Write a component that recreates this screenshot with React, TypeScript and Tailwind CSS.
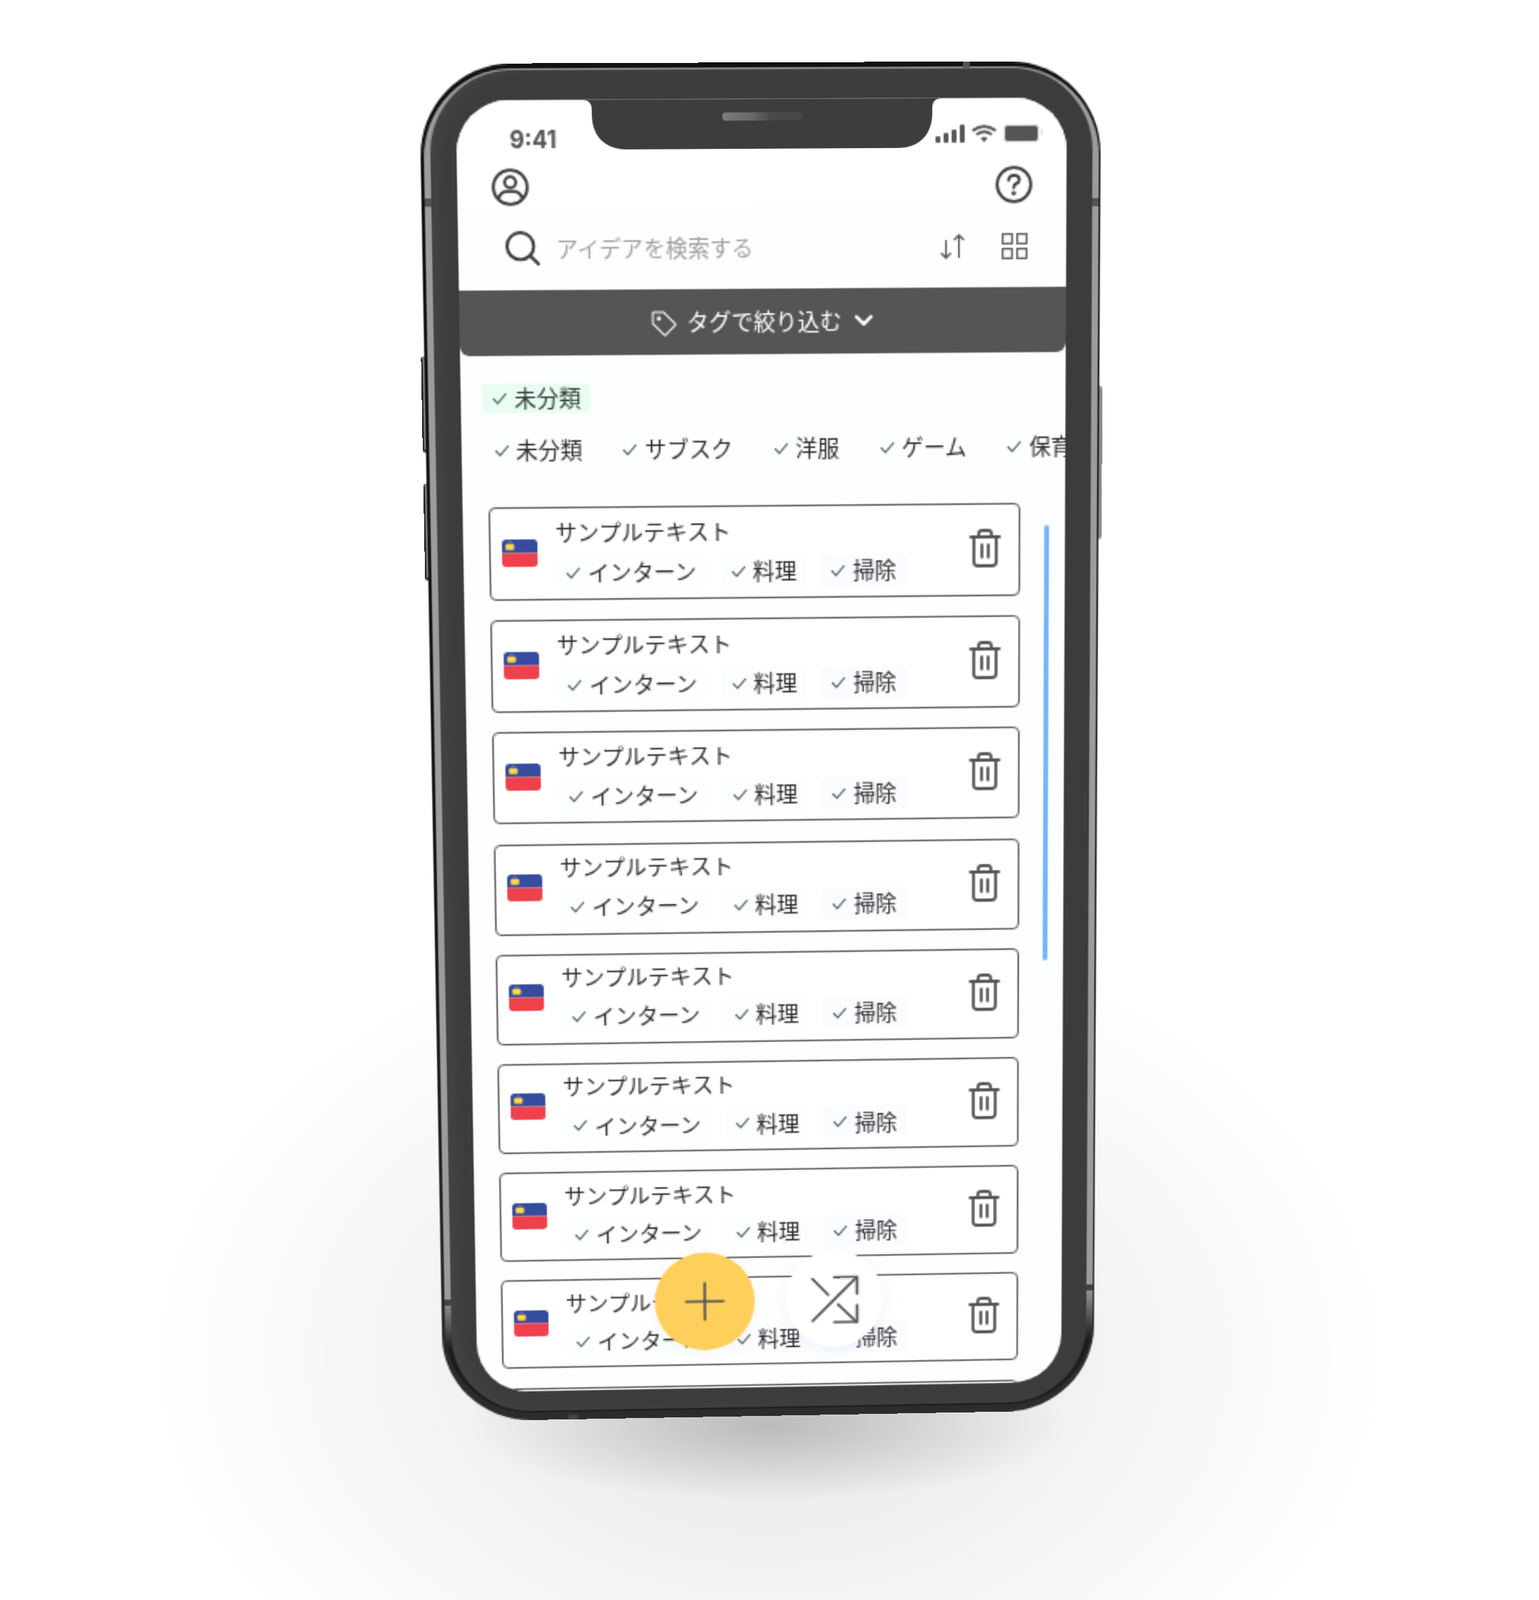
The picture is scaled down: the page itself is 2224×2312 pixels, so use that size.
import React from "react";

type P = [number, number];

function homography(x0: number, y0: number, w: number, h: number, q: P[]) {
  const [[x1, y1], [x2, y2], [x3, y3], [x4, y4]] = q;
  const dx1 = x2 - x3, dx2 = x4 - x3, sx = x1 - x2 + x3 - x4;
  const dy1 = y2 - y3, dy2 = y4 - y3, sy = y1 - y2 + y3 - y4;
  const den = dx1 * dy2 - dx2 * dy1;
  const g = (sx * dy2 - dx2 * sy) / den;
  const k = (dx1 * sy - sx * dy1) / den;
  const a = x2 - x1 + g * x2, b = x4 - x1 + k * x4, c = x1;
  const d = y2 - y1 + g * y2, e = y4 - y1 + k * y4, f = y1;
  const A = a / w, B = b / h, C = c - A * x0 - B * y0;
  const D = d / w, E = e / h, F = f - D * x0 - E * y0;
  const G = g / w, H = k / h, I = 1 - G * x0 - H * y0;
  return `matrix3d(${[A, D, 0, G, B, E, 0, H, 0, 0, 1, 0, C, F, 0, I].join(",")})`;
}

const phoneTransform = homography(22, 22, 375, 812, [
  [658.5, 145],
  [1541.7, 141],
  [1533.4, 1996.7],
  [690, 2011.5],
]);

const Check = () => (
  <svg width="10" height="10" viewBox="0 0 10 10" className="shrink-0" fill="none">
    <path d="M1 5.2 L3.8 8 L9 2" stroke="#4a5653" strokeWidth="1.05" />
  </svg>
);

const Chip = ({ label, bg = "" }: { label: string; bg?: string }) => (
  <div className={`flex h-[20px] shrink-0 items-center gap-[4px] rounded-[3px] px-[6px] ${bg}`}>
    <Check />
    <span className="whitespace-nowrap text-[13.7px] leading-none text-[#2d2d2d]">{label}</span>
  </div>
);

const Trash = () => (
  <svg width="20" height="24" viewBox="0 0 20 24" fill="none" stroke="#555" strokeWidth="1.8" strokeLinecap="round" strokeLinejoin="round">
    <path d="M1 5 H19" />
    <path d="M6 5 V3.2 Q6 1 8.2 1 H11.8 Q14 1 14 3.2 V5" />
    <path d="M3 5 V20.5 Q3 23 5.5 23 H14.5 Q17 23 17 20.5 V5" />
    <path d="M8 10 V17.5" />
    <path d="M12 10 V17.5" />
  </svg>
);

const Flag = () => (
  <svg width="22" height="17" viewBox="0 0 22 17" className="shrink-0">
    <defs>
      <clipPath id="flagclip">
        <rect width="22" height="17" rx="2.5" />
      </clipPath>
    </defs>
    <g clipPath="url(#flagclip)">
      <rect width="22" height="8.5" fill="#354c9f" />
      <rect y="8.5" width="22" height="8.5" fill="#ee414c" />
    </g>
    <path d="M4.9 0.7 V2.6 M4.2 1.4 H5.6" stroke="#a09a70" strokeWidth="0.45" />
    <path d="M2.1 4.6 Q2.1 2.5 3.6 2.5 Q4.5 2.5 4.9 3.1 Q5.3 2.5 6.2 2.5 Q7.7 2.5 7.7 4.6 L7.2 6.8 H2.6 Z" fill="#ffd74f" />
    <path d="M2.6 6.9 H7.2" stroke="#2b2f4a" strokeWidth="0.35" />
  </svg>
);

const Card = () => (
  <div className="flex h-[58px] w-[331px] shrink-0 items-start rounded-[4px] border border-[#5a5a5a] bg-white">
    <div className="ml-[7px] mt-[18.5px]">
      <Flag />
    </div>
    <div className="ml-[11px] flex flex-col pt-[3.5px]">
      <div className="h-[20px] whitespace-nowrap text-[13.8px] leading-[20px] text-[#2d2d2d]">サンプルテキスト</div>
      <div className="mt-[6px] flex gap-[9px]">
        <Chip label="インターン" bg="bg-[#fcfffd]" />
        <Chip label="料理" bg="bg-[#fcfdff]" />
        <Chip label="掃除" bg="bg-[#fbfcff]" />
      </div>
    </div>
    <div className="ml-auto mr-[11.5px] mt-[15px]">
      <Trash />
    </div>
  </div>
);

const Screen = () => (
  <div className="relative flex h-[812px] w-[375px] flex-col overflow-hidden rounded-[32px] bg-[#fdfeff] [font-family:'Noto_Sans_CJK_JP','Noto_Sans',sans-serif]">
    {/* notch */}
    <svg width="221" height="30" viewBox="0 0 221 30" className="absolute left-[77px] top-0">
      <path d="M0 0 Q6 0 6 6 V9 C6 22 14 30 27 30 H194 C207 30 215 22 215 9 V6 Q215 0 221 0Z" fill="#3d3d3d" />
      <defs>
        <linearGradient id="spk" x1="0" x2="1" y1="0" y2="0">
          <stop offset="0" stopColor="#7c7c7c" />
          <stop offset="0.4" stopColor="#666" />
          <stop offset="0.6" stopColor="#4a4a4a" />
          <stop offset="1" stopColor="#484848" />
        </linearGradient>
      </defs>
      <rect x="86" y="8" width="49" height="5" rx="2" fill="url(#spk)" />
    </svg>

    {/* status bar */}
    <div className="flex h-[41px] shrink-0 items-start justify-between bg-white pl-[32.5px] pr-[15px] pt-[15.5px]">
      <span className="-mt-[2px] text-[14px] font-bold leading-[19px] text-[#555] [font-family:Inter,sans-serif]">9:41</span>
      <div className="flex items-center gap-[4px]">
        <svg width="18" height="11" viewBox="0 0 18 11" fill="#555">
          <rect x="0" y="7" width="3" height="4" rx="1" />
          <rect x="5" y="5" width="3" height="6" rx="1" />
          <rect x="10" y="3" width="3" height="8" rx="1" />
          <rect x="15" y="0" width="3" height="11" rx="1" />
        </svg>
        <svg width="16" height="11" viewBox="0 0 16 11" fill="none" stroke="#555" strokeWidth="1.7">
          <path d="M0.8 3.8 Q8 -1.6 15.2 3.8" />
          <path d="M3.3 6.2 Q8 2.6 12.7 6.2" />
          <path d="M8 10.8 L5.8 8.3 Q8 6.8 10.2 8.3 Z" fill="#555" stroke="none" />
        </svg>
        <div className="flex items-center">
          <div className="h-[11px] w-[22px] rounded-[2.5px] border-[1.5px] border-[#dcdcdc] bg-[#555]" />
          <div className="ml-[1px] h-[4px] w-[1px] bg-[#ddd]" />
        </div>
      </div>
    </div>

    {/* top icons */}
    <div className="-mt-[0.5px] flex h-[24px] shrink-0 items-center justify-between bg-white pl-[21px] pr-[21px]">
      <svg width="23" height="23" viewBox="0 0 23 23" fill="none" stroke="#3d3d3d" strokeWidth="1.8">
        <circle cx="11.5" cy="11.5" r="10.4" />
        <circle cx="11.5" cy="8.5" r="3.4" />
        <path d="M4.3 18.6 Q5.4 14.2 9 14.2 H14 Q17.6 14.2 18.7 18.6" />
      </svg>
      <svg width="23" height="23" viewBox="0 0 23 23" fill="none" stroke="#3d3d3d" strokeWidth="1.8" strokeLinecap="round">
        <circle cx="11.5" cy="11.5" r="10.4" />
        <path d="M8.2 8.8 Q8.4 5.8 11.6 5.8 Q14.8 5.8 14.8 8.6 Q14.8 10.4 12.6 11.2 Q11.4 11.7 11.4 13.4" />
        <circle cx="11.4" cy="16.8" r="0.5" fill="#3d3d3d" />
      </svg>
    </div>

    {/* search */}
    <div className="mt-[14.5px] flex h-[21px] shrink-0 items-center pl-[28.5px] pr-[24px]">
      <svg width="21" height="21" viewBox="0 0 22 22" fill="none" stroke="#3d3d3d" strokeWidth="2" strokeLinecap="round" className="shrink-0">
        <circle cx="9.6" cy="9.6" r="8.6" />
        <path d="M16 16 L21 21" />
      </svg>
      <span className="ml-[10.5px] whitespace-nowrap text-[13.6px] leading-none text-[#a0a0a0]">アイデアを検索する</span>
      <svg width="17" height="16" viewBox="0 0 17 16" fill="none" stroke="#555" strokeWidth="1.1" className="ml-auto">
        <path d="M4.5 4 V15 M1.5 12 L4.5 15 L7.5 12" />
        <path d="M12.5 15 V1 M9.5 4 L12.5 1 L15.5 4" />
      </svg>
      <svg width="16" height="16" viewBox="0 0 16 16" fill="none" stroke="#555" strokeWidth="1.1" className="ml-[22px]">
        <rect x="0.6" y="0.6" width="5.8" height="5.8" />
        <rect x="9.6" y="0.6" width="5.8" height="5.8" />
        <rect x="0.6" y="9.6" width="5.8" height="5.8" />
        <rect x="9.6" y="9.6" width="5.8" height="5.8" />
      </svg>
    </div>

    {/* tag bar */}
    <div className="mt-[15px] flex h-[39.5px] shrink-0 items-center justify-center rounded-b-[6px] bg-[#555] pr-[2px]">
      <svg width="16" height="16" viewBox="0 0 15 15" fill="none" stroke="#fff" strokeWidth="0.9" strokeLinejoin="round" className="mt-[2px]">
        <path d="M1 1.5 Q1 1 1.5 1 H7.4 L14 7.6 Q14.4 8 14 8.4 L8.4 14 Q8 14.4 7.6 14 L1 7.4 Z" />
        <circle cx="4.5" cy="4.5" r="0.8" />
      </svg>
      <span className="ml-[6.5px] whitespace-nowrap text-[13.7px] leading-none text-white">タグで絞り込む</span>
      <svg width="11" height="8" viewBox="0 0 11 8" fill="none" stroke="#fff" strokeWidth="2" strokeLinecap="round" strokeLinejoin="round" className="ml-[8.5px]">
        <path d="M1 1.5 L5.5 6 L10 1.5" />
      </svg>
    </div>

    {/* selected chip */}
    <div className="ml-[13px] mt-[17px] flex h-[18.5px] w-[67px] shrink-0 items-center gap-[4px] rounded-[3px] bg-[#e9fdf3] px-[6px]">
      <Check />
      <span className="whitespace-nowrap text-[13.7px] leading-none text-[#2f3b34]">未分類</span>
    </div>

    {/* chips row */}
    <div className="ml-[13.5px] mt-[13px] flex shrink-0 gap-[12.7px] overflow-hidden">
      <Chip label="未分類" />
      <Chip label="サブスク" bg="bg-[#fdfeff]" />
      <Chip label="洋服" bg="bg-[#fdfeff]" />
      <Chip label="ゲーム" bg="bg-[#fdfeff]" />
      <Chip label="保育" />
    </div>

    {/* list */}
    <div className="mt-[25px] flex min-h-0 flex-1 flex-col gap-[12.2px] overflow-hidden pl-[16px]">
      {Array.from({ length: 9 }).map((_, i) => (
        <Card key={i} />
      ))}
    </div>

    {/* scrollbar */}
    <div className="absolute left-[361.5px] top-[261.5px] h-[275.5px] w-[3.5px] rounded-full bg-[#73b5ff]" />

    {/* FABs */}
    <div className="absolute left-[113.5px] top-[723px] flex h-[64px] w-[64px] items-center justify-center rounded-full bg-[#ffcf5c] shadow-[0_3px_10px_rgba(170,190,255,0.12)]">
      <svg width="26" height="26" viewBox="0 0 26 26" fill="none" stroke="#555" strokeWidth="1.6" strokeLinecap="round">
        <path d="M13 1 V25 M1 13 H25" />
      </svg>
    </div>
    <div className="absolute left-[198px] top-[723px] flex h-[63px] w-[62px] items-center justify-center rounded-full bg-white shadow-[0_3px_12px_rgba(170,190,255,0.18)]">
      <svg width="32" height="32" viewBox="0 0 32 32" fill="none" stroke="#555" strokeWidth="1.7" strokeLinecap="round">
        <path d="M2 30 L30 2" />
        <path d="M16 1.5 H30.5 V12.5" />
        <path d="M2 2.5 L12 13" />
        <path d="M18.5 19.5 L30 31" />
        <path d="M16 31 H30.5 V20" />
      </svg>
    </div>
  </div>
);

const SideButton = ({ pos }: { pos: string }) => (
  <div className={`absolute w-[5px] rounded-[2px] border-b-[2px] border-l border-[#222] bg-[#8d8d8d] ${pos}`} />
);

const Phone = () => (
  <div style={{ transform: phoneTransform }} className="absolute left-0 top-0 h-[853px] w-[418px] origin-top-left">
    {/* side buttons */}
    <SideButton pos="-left-[2px] top-[177px] h-[59px]" />
    <SideButton pos="-left-[2px] top-[255px] h-[60px]" />
    <div className="absolute -right-[1.5px] top-[198px] h-[95px] w-[4px] rounded-[2px] bg-[#8d8d8d]" />

    <div className="relative h-[853px] w-[418px] rounded-[56px] bg-[linear-gradient(#111_0%,#161616_60%,#2c2c2c_94%)] px-[1.5px] pb-[5.5px] pt-[2.5px]">
      <div className="rounded-[54px] bg-[linear-gradient(#9c9c9c_0%,#9c9c9c_91%,#1c1c1c_95%)] px-[4px] pb-[1px] pt-[1px]">
        <div className="rounded-[50px] bg-[#3c3c3c] pb-[13px] pl-[16.5px] pr-[15.5px] pt-[18.5px] shadow-[inset_6px_0_8px_rgba(255,255,255,0.04)]">
          <Screen />
        </div>
      </div>
      {/* antenna bands */}
      <div className="absolute left-[1.5px] top-[81px] h-[5px] w-[4px] bg-[#555]" />
      <div className="absolute right-[1.5px] top-[83px] h-[5px] w-[4px] bg-[#555]" />
      <div className="absolute left-[1.5px] top-[773px] h-[4px] w-[4px] bg-[#444]" />
      <div className="absolute right-[1.5px] top-[770px] h-[4px] w-[4px] bg-[#444]" />
      <div className="absolute right-[81.5px] top-0 h-[3.5px] w-[4px] bg-[#555]" />
      <div className="absolute bottom-0 left-[80px] h-[3px] w-[6px] bg-[#444]" />
    </div>
  </div>
);

export default function App() {
  return (
    <div className="relative h-[2312px] w-[2224px] overflow-hidden bg-white bg-[radial-gradient(ellipse_440px_110px_at_1110px_2060px,rgba(0,0,0,0.2),transparent),radial-gradient(ellipse_900px_640px_at_1110px_1960px,rgba(0,0,0,0.1),transparent)]">
      <Phone />
    </div>
  );
}
